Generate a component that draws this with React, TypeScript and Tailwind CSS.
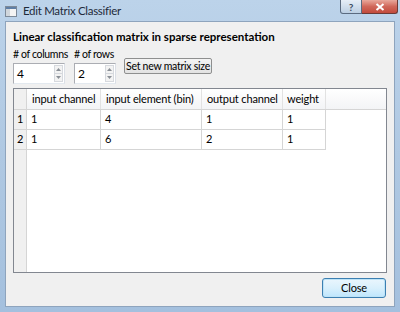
import React from 'react';

const rows = [
  { id: 1, inCh: '1', inEl: '4', outCh: '1', weight: '1' },
  { id: 2, inCh: '1', inEl: '6', outCh: '2', weight: '1' },
];

function SpinBox({ value, width }: { value: string; width: string }) {
  return (
    <div className={`flex h-[21px] ${width} items-stretch border border-[#abadb3] border-r-[#dbdfe6] border-b-[#e3e9ef] bg-white`}>
      <span className="flex flex-1 items-center pl-[3px] text-[12px] text-black">{value}</span>
      <div className="my-[1px] mr-[1px] flex w-[9px] flex-col">
        <div className="flex flex-1 items-center justify-center border border-[#d6d9de] bg-[#f3f3f3]">
          <svg width="5" height="3" viewBox="0 0 5 3">
            <path d="M0 3 L2.5 0 L5 3 Z" fill="#8a8f96" />
          </svg>
        </div>
        <div className="flex flex-1 items-center justify-center border border-t-0 border-[#d6d9de] bg-[#f3f3f3]">
          <svg width="5" height="3" viewBox="0 0 5 3">
            <path d="M0 0 L2.5 3 L5 0 Z" fill="#8a8f96" />
          </svg>
        </div>
      </div>
    </div>
  );
}

export default function App() {
  return (
    <div
      className="flex h-[312px] w-[400px] flex-col bg-gradient-to-b from-[#bcd3ea] via-[#afc8e2] to-[#a4c0de] px-[5px] pb-[5px] text-[11px] tracking-[-0.15px] text-black"
      style={{ fontFamily: 'Lato, "Noto Sans", sans-serif' }}
    >
      {/* Title bar */}
      <div className="flex h-[21px] items-start justify-between">
        <div className="flex items-center gap-[6px] pt-[3px]">
          <svg width="12" height="11" viewBox="0 0 12 11">
            <rect x="0.5" y="0.5" width="11" height="10" fill="#f4f4f4" stroke="#7d8a99" />
            <rect x="1" y="1" width="4" height="9" fill="#d0d6dc" />
            <rect x="1" y="1" width="10" height="2" fill="#5f7fa6" />
          </svg>
          <span className="text-[11.5px] leading-[16px] tracking-[-0.3px] text-[#1e2a3a]">Edit Matrix Classifier</span>
        </div>
        <div className="mr-[-3px] flex h-[14px]">
          <div className="flex w-[22px] items-center justify-center rounded-bl-[3px] border border-t-0 border-[#5b6b80] bg-gradient-to-b from-[#e6eef7] to-[#bccfe3] text-[10px] font-bold leading-none text-[#3c4c60]">
            ?
          </div>
          <div className="flex w-[36px] items-center justify-center rounded-br-[3px] border border-t-0 border-l-0 border-[#6b3a36] bg-gradient-to-b from-[#e8a89c] via-[#d0675a] to-[#c24a3c]">
            <svg width="10" height="8" viewBox="0 0 10 8">
              <path d="M1.5 1 L8.5 7 M8.5 1 L1.5 7" stroke="#ffffff" strokeWidth="2" />
            </svg>
          </div>
        </div>
      </div>

      {/* Client area */}
      <div className="flex flex-1 flex-col border border-[#8ea4bd] bg-[#f0f0f0] px-[7px] pt-[7px] pb-[8px]">
        <div className="whitespace-nowrap text-[11.5px] font-bold leading-[16px] tracking-normal">
          Linear classification matrix in sparse representation
        </div>

        <div className="flex items-center">
          <div className="grid grid-cols-[54px_42px] gap-x-[7px]">
            <span className="whitespace-nowrap text-[10.5px] leading-[18px] tracking-[-0.35px]"># of columns</span>
            <span className="whitespace-nowrap text-[10.5px] leading-[18px] tracking-[-0.35px]"># of rows</span>
            <SpinBox value="4" width="w-[52px]" />
            <SpinBox value="2" width="w-[42px]" />
          </div>
          <button className="mt-[2px] ml-[8px] h-[16px] w-[88px] rounded-[2px] border border-[#8e8f8f] bg-gradient-to-b from-[#f4f4f4] to-[#e2e2e2] text-[10.5px] leading-[14px] whitespace-nowrap tracking-[-0.25px]">
            Set new matrix size
          </button>
        </div>

        {/* Table */}
        <div className="mt-[4px] flex flex-1 flex-col border border-[#828790] bg-white">
          <div className="flex h-[21px] border-b border-[#d5d5d5] bg-gradient-to-b from-[#ffffff] to-[#f3f4f6]">
            <div className="w-[13px] border-r border-[#d5d5d5] bg-[#f0f0f0]" />
            <div className="flex w-[74px] items-center whitespace-nowrap border-r border-[#e2e2e2] pl-[5px]">input channel</div>
            <div className="flex w-[101px] items-center whitespace-nowrap border-r border-[#e2e2e2] pl-[5px]">input element (bin)</div>
            <div className="flex w-[81px] items-center whitespace-nowrap border-r border-[#e2e2e2] pl-[5px]">output channel</div>
            <div className="flex w-[43px] items-center whitespace-nowrap border-r border-[#e2e2e2] pl-[4px]">weight</div>
          </div>
          <div className="flex flex-1">
            <div className="flex w-[13px] flex-col bg-[#f0f0f0]">
              {rows.map((r) => (
                <div key={r.id} className="flex h-[20px] items-center justify-center border-b border-r border-[#d5d5d5]">
                  {r.id}
                </div>
              ))}
              <div className="flex-1 border-r border-[#d5d5d5]" />
            </div>
            <div className="flex flex-col">
              {rows.map((r) => (
                <div key={r.id} className="flex h-[20px]">
                  <div className="flex w-[74px] items-center border-b border-r border-[#d5d5d5] pl-[4px]">{r.inCh}</div>
                  <div className="flex w-[101px] items-center border-b border-r border-[#d5d5d5] pl-[4px]">{r.inEl}</div>
                  <div className="flex w-[81px] items-center border-b border-r border-[#d5d5d5] pl-[4px]">{r.outCh}</div>
                  <div className="flex w-[43px] items-center border-b border-r border-[#d5d5d5] pl-[4px]">{r.weight}</div>
                </div>
              ))}
            </div>
          </div>
        </div>

        <div className="mt-[5px] flex justify-end pr-[1px]">
          <button className="h-[20px] w-[64px] rounded-[3px] border border-[#3c7fb1] bg-gradient-to-b from-[#eaf6fd] via-[#d9f0fc] to-[#bee6fd] leading-[18px] shadow-[inset_0_0_0_1px_#bde3f7]">
            Close
          </button>
        </div>
      </div>
    </div>
  );
}
